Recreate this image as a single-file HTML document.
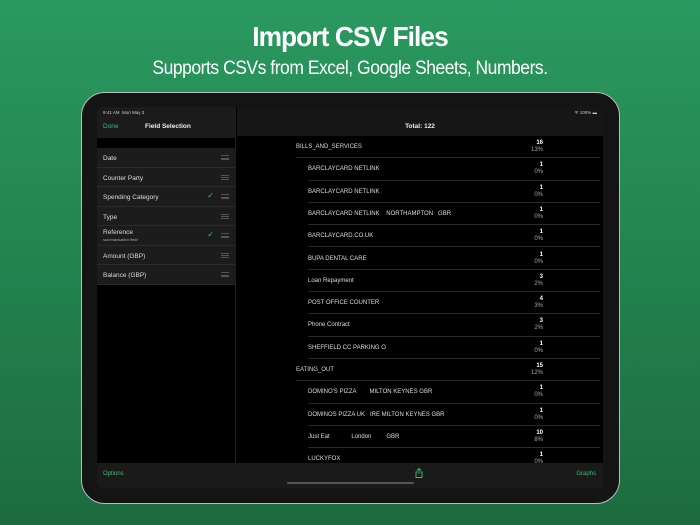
<!DOCTYPE html>
<html><head><meta charset="utf-8"><style>
*{margin:0;padding:0;box-sizing:border-box}
body{width:700px;height:525px;overflow:hidden;background:linear-gradient(180deg,#2a9960 0%,#23834f 50%,#1d6b3f 100%);font-family:"Liberation Sans",sans-serif;position:relative;color:#ddd}
h1{position:absolute;top:21px;width:100%;text-align:center;color:#fff;font-size:28px;font-weight:bold;letter-spacing:-1px;transform:scaleX(0.94)}
h2{position:absolute;top:58px;width:100%;text-align:center;color:#fff;font-size:19px;font-weight:normal;letter-spacing:-0.5px;transform:scaleX(0.92)}
.dev{position:absolute;left:81px;top:92px;width:539px;height:412px;border-radius:24px;background:#141414;border:1.5px solid #bbb}
.scr{position:absolute;left:97px;top:107px;width:506px;height:381px;background:#000;overflow:hidden;border-radius:4px}
.side{position:absolute;left:0;top:0;width:139px;height:381px;background:#000;border-right:1px solid #222}
.snav{position:absolute;left:0;top:0;width:139px;height:31px;background:#1b1b1b}
.st{position:absolute;font-size:4.5px;color:#ccc;left:6px;top:3px}
.done{position:absolute;left:6px;top:16px;font-size:6.5px;color:#34c072}
.fs{position:absolute;left:48px;top:16px;font-size:6.5px;color:#eee;font-weight:bold}
.row{position:absolute;left:0;width:139px;height:19.5px;background:#1c1c1c;border-bottom:1px solid #2a2a2a;font-size:6.5px;color:#ddd;padding:7px 6px}
.row .h{position:absolute;right:7px;top:7px;width:8px;height:5px;border-top:1px solid #555;border-bottom:1px solid #555}
.row .h:after{content:"";position:absolute;left:0;right:0;top:1.5px;border-top:1px solid #555}
.row .c{position:absolute;right:22px;top:4px;color:#34c072;font-size:8px}
.main{position:absolute;left:140px;top:0;width:366px;height:381px}
.mnav{position:absolute;left:0;top:0;width:366px;height:29px;background:#161616}
.tot{position:absolute;top:16px;width:100%;text-align:center;font-size:6.5px;color:#eee;font-weight:bold}
.it{position:absolute;left:71px;right:3px;height:22.3px;border-bottom:1px solid #2a2a2a;font-size:6px;color:#ddd;white-space:pre}
.it span.l{position:absolute;left:0;top:8px}
.it .n{position:absolute;right:57px;top:4px;text-align:right;font-size:6px;line-height:7px;color:#eee}
.it .n b{font-weight:bold;color:#fff}
.it .n i{font-style:normal;color:#aaa}
.bar{position:absolute;left:0;top:356px;width:506px;height:25px;background:#1a1a1a}
.bar .o{position:absolute;left:6px;top:8px;font-size:6px;color:#34c072}
.bar .g{position:absolute;right:7px;top:8px;font-size:6px;color:#34c072}
.home{position:absolute;left:190px;top:19px;width:127px;height:2px;background:#555;border-radius:1px}
</style></head><body>
<h1>Import CSV Files</h1>
<h2>Supports CSVs from Excel, Google Sheets, Numbers.</h2>
<div class="dev"></div>
<div class="scr">
 <div class="side">
  <div class="snav"><div class="st">9:41 AM&nbsp; Mon May 3</div><div class="done">Done</div><div class="fs">Field Selection</div></div>
  <div class="row" style="top:41px">Date<div class="h"></div></div>
  <div class="row" style="top:60.5px">Counter Party<div class="h"></div></div>
  <div class="row" style="top:80px">Spending Category<div class="c">✓</div><div class="h"></div></div>
  <div class="row" style="top:99.5px">Type<div class="h"></div></div>
  <div class="row" style="top:119px;padding-top:3px">Reference<div style="font-size:4px;color:#aaa;font-style:italic;margin-top:1px">summarisation field</div><div class="c">✓</div><div class="h"></div></div>
  <div class="row" style="top:138.5px">Amount (GBP)<div class="h"></div></div>
  <div class="row" style="top:158px">Balance (GBP)<div class="h"></div></div>
 </div>
 <div class="main">
  <div class="mnav"><div style="position:absolute;right:6px;top:3px;font-size:4.5px;color:#ccc">ᯤ 100% ▬</div><div class="tot">Total: 122</div></div>
  <div style="position:absolute;left:0;top:29px;width:366px;height:330px">
   <div class="it" style="top:0;left:59px"><span class="l">BILLS_AND_SERVICES</span><div class="n"><b>16</b><br><i>13%</i></div></div>
   <div class="it" style="top:22.3px"><span class="l">BARCLAYCARD NETLINK</span><div class="n"><b>1</b><br><i>0%</i></div></div>
   <div class="it" style="top:44.6px"><span class="l">BARCLAYCARD NETLINK</span><div class="n"><b>1</b><br><i>0%</i></div></div>
   <div class="it" style="top:66.9px"><span class="l">BARCLAYCARD NETLINK    NORTHAMPTON   GBR</span><div class="n"><b>1</b><br><i>0%</i></div></div>
   <div class="it" style="top:89.2px"><span class="l">BARCLAYCARD.CO.UK</span><div class="n"><b>1</b><br><i>0%</i></div></div>
   <div class="it" style="top:111.5px"><span class="l">BUPA DENTAL CARE</span><div class="n"><b>1</b><br><i>0%</i></div></div>
   <div class="it" style="top:133.8px"><span class="l">Loan Repayment</span><div class="n"><b>3</b><br><i>2%</i></div></div>
   <div class="it" style="top:156.1px"><span class="l">POST OFFICE COUNTER</span><div class="n"><b>4</b><br><i>3%</i></div></div>
   <div class="it" style="top:178.4px"><span class="l">Phone Contract</span><div class="n"><b>3</b><br><i>2%</i></div></div>
   <div class="it" style="top:200.7px"><span class="l">SHEFFIELD CC PARKING O</span><div class="n"><b>1</b><br><i>0%</i></div></div>
   <div class="it" style="top:223px;left:59px"><span class="l">EATING_OUT</span><div class="n"><b>15</b><br><i>12%</i></div></div>
   <div class="it" style="top:245.3px"><span class="l">DOMINO'S PIZZA        MILTON KEYNES GBR</span><div class="n"><b>1</b><br><i>0%</i></div></div>
   <div class="it" style="top:267.6px"><span class="l">DOMINOS PIZZA UK   IRE MILTON KEYNES GBR</span><div class="n"><b>1</b><br><i>0%</i></div></div>
   <div class="it" style="top:289.9px"><span class="l">Just Eat             London         GBR</span><div class="n"><b>10</b><br><i>8%</i></div></div>
   <div class="it" style="top:312.2px"><span class="l">LUCKYFOX</span><div class="n"><b>1</b><br><i>0%</i></div></div>
  </div>
 </div>
 <div class="bar"><div class="o">Options</div>
  <svg style="position:absolute;left:318px;top:5px" width="8" height="10" viewBox="0 0 8 10"><path d="M4 0.5V6M2 2.5L4 0.5 6 2.5M2.5 4H1V9.5H7V4H5.5" fill="none" stroke="#34c072" stroke-width="0.9"/></svg>
  <div class="g">Graphs</div><div class="home"></div></div>
</div>
</body></html>
